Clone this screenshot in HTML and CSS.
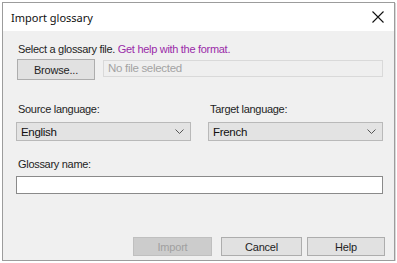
FILE: index.html
```html
<!DOCTYPE HTML>
<html>
<head>
<meta charset="utf-8">
<title>Import glossary</title>
<link rel="stylesheet" href="styles.css">
</head>

<body>
<div class="dlg">
	<div class="dlg-title">
		<span>Import glossary</span>
		<svg class="close" width="12" height="12" viewBox="0 0 12 12"><path d="M0.5 0.5L11.5 11.5M11.5 0.5L0.5 11.5" stroke="#111" stroke-width="1.1"/></svg>
	</div>
	<div class="dlg-body">
		<p class="lbl">Select a glossary file. <a href="javascript:;" class="link">Get help with the format.</a></p>
		<div class="file-row">
			<button class="btn browse">Browse...</button>
			<div class="file-name">No file selected</div>
		</div>

		<div class="langs">
			<div class="field">
				<p class="lbl">Source language:</p>
				<div class="combo"><span>English</span><svg width="9" height="5" viewBox="0 0 9 5"><path d="M0.5 0.5L4.5 4.5L8.5 0.5" fill="none" stroke="#555" stroke-width="1"/></svg></div>
			</div>
			<div class="field">
				<p class="lbl">Target language:</p>
				<div class="combo"><span>French</span><svg width="9" height="5" viewBox="0 0 9 5"><path d="M0.5 0.5L4.5 4.5L8.5 0.5" fill="none" stroke="#555" stroke-width="1"/></svg></div>
			</div>
		</div>

		<p class="lbl name-lbl">Glossary name:</p>
		<div class="text-box"></div>

		<div class="actions">
			<button class="btn off">Import</button>
			<button class="btn cancel">Cancel</button>
			<button class="btn help">Help</button>
		</div>
	</div>
</div>
</body>
</html>
```

FILE: styles.css
```css
* {margin:0; padding:0; box-sizing:border-box;}
body {background:#fff; font-family:"Liberation Sans", Arial, sans-serif; font-size:11px; letter-spacing:-0.3px; color:#1e1e1e;}

.dlg {width:393px; height:259px; margin:2px 0 0 2px; border:1px solid #9c9c9c; background:#f0f0f0; display:flex; flex-direction:column; box-shadow:1px 1px 0 #d8d8d8;}
.dlg-title {height:28px; background:#fff; display:flex; align-items:center; justify-content:space-between; padding:0 10px 0 8px;}
.dlg-title span {font-family:"Noto Sans", sans-serif; font-size:11px; letter-spacing:0; color:#111;}
.close {margin-top:-1px;}

.dlg-body {flex:1; padding:12px 11px 0 13px; display:flex; flex-direction:column;}
.lbl {line-height:13px; padding-left:2px;}
.link {color:#9a2aa8; text-decoration:none;}

.file-row {display:flex; align-items:flex-start; margin-top:3px;}
.btn {font-family:"Liberation Sans", Arial, sans-serif; font-size:11px; letter-spacing:-0.2px; color:#1e1e1e; background:#e1e1e1; border:1px solid #adadad; height:20px; width:79px;}
.browse {width:78px; height:21px; margin-left:1px;}
.file-name {margin:1px 0 0 8px; flex:1; height:17px; border:1px solid #d9d9d9; background:#efefef; color:#a3a3a3; padding:1px 0 0 4px; font-size:11.5px;}

.langs {display:flex; gap:17px; margin-top:23px;}
.field {flex:1;}
.combo {margin-top:6px; height:19px; border:1px solid #b9b9b9; background:#e3e3e3; display:flex; align-items:center; justify-content:space-between; padding:0 6px 0 4px; font-size:11.5px; color:#111;}

.name-lbl {margin-top:17px;}
.text-box {margin-top:5px; height:18px; border:1px solid #8a8a8a; background:#fff;}

.actions {display:flex; justify-content:flex-end; margin-top:43px; margin-right:-2px;}
.actions .btn {height:19px;}
.btn.off {background:#cccccc; border-color:#bfbfbf; color:#a0a0a0;}
.btn.cancel {width:81px; margin-left:9px;}
.btn.help {width:78px; margin-left:5px;}
```
